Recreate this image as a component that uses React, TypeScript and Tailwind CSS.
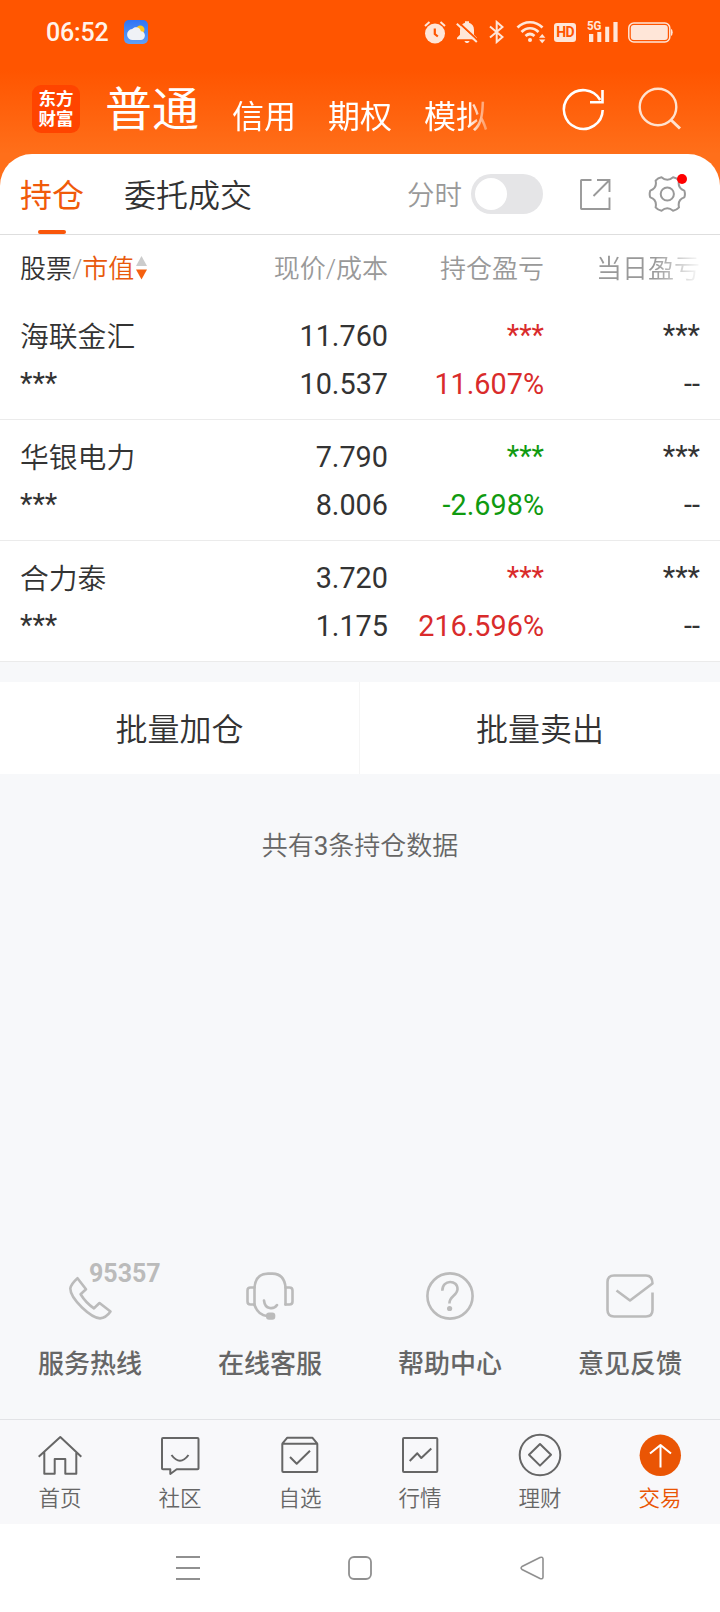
import { useState } from "react";
import type { ReactNode } from "react";

type Holding = {
  name: string;
  price: string;
  cost: string;
  profit: string;
  up: boolean;
};

const holdings: Holding[] = [
  { name: "海联金汇", price: "11.760", cost: "10.537", profit: "11.607%", up: true },
  { name: "华银电力", price: "7.790", cost: "8.006", profit: "-2.698%", up: false },
  { name: "合力泰", price: "3.720", cost: "1.175", profit: "216.596%", up: true },
];

function StatusBar() {
  return (
    <div className="h-16 pt-5 pl-[46px] pr-[47px] flex items-start text-[#ffe6d8]">
      <span className="mt-px text-[25px] leading-6 font-medium tracking-[-0.2px] text-[#fff3ea] w-[78px] whitespace-nowrap">06:52</span>
      <svg className="w-6 h-6" viewBox="0 0 24 24">
        <defs>
          <linearGradient id="sky" x1="0" y1="0" x2="0" y2="1">
            <stop offset="0" stopColor="#2f74f5" />
            <stop offset="1" stopColor="#5fa0f8" />
          </linearGradient>
        </defs>
        <rect width="24" height="24" rx="5" fill="url(#sky)" />
        <circle cx="16.3" cy="9.7" r="4.2" fill="#ffc61c" />
        <path d="M9 20a5.500 5.500 0 0 1-.8-11c1.500-1.600 3-2 4.500-1.700 2.300.3 3.700 1.900 4.200 3.900 2.300 0 4 1.700 4 4.300S19 20 16.700 20z" fill="#eff2f6" />
      </svg>

      <div className="ml-auto flex items-start">
        <svg className="w-[22px] h-6" viewBox="0 0 22 24">
          <circle cx="11" cy="13.500" r="10" fill="currentColor" />
          <path d="M1 6l4.500-4M21 6l-4.500-4" stroke="currentColor" strokeWidth="2" />
          <path d="M10.800 8.500V14l3 2.500" stroke="#f50" strokeWidth="2.200" fill="none" />
        </svg>
        <svg className="ml-[10px] w-[22px] h-6" viewBox="0 0 22 24">
          <path d="M1 19.300v-1.600l3-3V10c0-4 2-6.300 5-7.200V1.300h4v1.500c3 .9 5 3.200 5 7.200v4.700l3 3v1.600z" fill="currentColor" />
          <path d="M1.500 1.500l20 18.500" stroke="#f50" strokeWidth="2" />
          <path d="M.8 3.700l20 18.300" stroke="currentColor" strokeWidth="2" />
          <path d="M8.500 21h5c-.5 1.500-1.300 2-2.500 2s-2-.5-2.500-2z" fill="currentColor" />
        </svg>
        <svg className="ml-[11px] w-[15px] h-6" viewBox="0 0 15 24" fill="none" stroke="currentColor" strokeWidth="2">
          <path d="M1 6.500l12.500 10.500-5.800 5V2l5.800 5L1 17.500" />
        </svg>
        <svg className="ml-3 w-[30px] h-6" viewBox="0 0 30 24" fill="none">
          <path d="M1.500 7.500c7-7 18-7 25 0M5.500 12c5-5 12-5 17 0M9.500 16c3-2.700 6-2.700 9 0" stroke="currentColor" strokeWidth="2.700" />
          <circle cx="14" cy="20" r="2" fill="currentColor" />
          <path d="M23 17.700l3.200-3.700 3.200 3.700zM23 19.500h6.400l-3.200 3.700z" fill="currentColor" />
        </svg>
        <div className="ml-2 mt-[3px] w-[22px] h-[19px] rounded-[3px] bg-[#ffe6d8] text-[#ff5500] text-[14px] leading-[19px] font-bold text-center tracking-tighter">HD</div>
        <svg className="ml-[11px] w-[31px] h-6 overflow-visible" viewBox="0 0 31 24" fill="currentColor">
          <text x="0" y="10.300" fontSize="13" fontWeight="700" textLength="14.500" lengthAdjust="spacingAndGlyphs">5G</text>
          <path d="M2 14h4.300v8H2zM10.300 12h4v10h-4zM18.200 6.700h4V22h-4zM26.400 2h4.200v20h-4.200z" />
        </svg>
        <svg className="ml-[10px] w-[45px] h-6" viewBox="0 0 45 24">
          <rect x=".8" y="3" width="41" height="19" rx="5" fill="none" stroke="currentColor" strokeWidth="1.500" />
          <rect x="2.800" y="5" width="37" height="15" rx="3" fill="currentColor" />
          <path d="M43 8.700q1.700.5 1.700 3.600T43 16z" fill="currentColor" />
        </svg>
      </div>
    </div>
  );
}

function TitleBar() {
  return (
    <div className="h-[90px] flex items-start pl-8 text-white">
      <div className="mt-[21px] size-12 rounded-[9px] bg-[#ff4400] flex flex-col items-center justify-center text-[17.500px] leading-[20px] font-bold">
        <span>东方</span>
        <span>财富</span>
      </div>
      <div className="ml-[25px] mt-[22px] text-[47px] leading-[48px]">普通</div>
      <div className="ml-[33px] mt-[33px] w-[256px] flex gap-8 whitespace-nowrap text-[32px] leading-10 mask-r-from-[236px] mask-r-to-[264px]">
        <span>信用</span>
        <span>期权</span>
        <span>模拟</span>
      </div>
      <svg className="ml-[72px] mt-[22px] size-12 shrink-0" viewBox="0 0 48 48" fill="none" stroke="currentColor" strokeWidth="2.600">
        <path d="M42.700 24A19.400 19.400 0 1 1 40.200 14" />
        <path d="M42.500 4v12.300H30" />
      </svg>
      <svg className="ml-7 mt-[22px] size-12 shrink-0 text-[#ffe2cf]" viewBox="0 0 48 48" fill="none" stroke="currentColor" strokeWidth="2.400">
        <circle cx="22" cy="21" r="18.300" />
        <path d="M34.500 33.500l9.500 9" strokeWidth="3" />
      </svg>
    </div>
  );
}

function Tabs() {
  const [live, setLive] = useState(false);

  return (
    <div className="h-[81px] border-b border-[#dedede] flex items-center pl-5">
      <div className="relative pt-1 text-[32px] leading-8 text-[#f05a0a]">
        持仓
        <span className="absolute left-[18px] -bottom-[22px] w-7 h-1 rounded-sm bg-[#f9560a]" />
      </div>
      <div className="ml-10 pt-1 text-[32px] leading-8 font-[350] text-[#333]">委托成交</div>
      <div className="ml-[155px] pt-1 text-[27.500px] leading-8 font-[350] text-[#999]">分时</div>
      <button
        onClick={() => setLive(!live)}
        className={live ? "ml-[9px] w-[72px] h-10 p-1 rounded-full flex justify-end bg-[#f9560a]" : "ml-[9px] w-[72px] h-10 p-1 rounded-full flex bg-[#e5e5e7]"}
      >
        <span className="size-8 rounded-full bg-white" />
      </button>
      <svg className="ml-9 size-8" viewBox="0 0 32 32" fill="none" stroke="#999" strokeWidth="1.900">
        <path d="M12.500 2H2.500Q2 2 2 2.500V30.500Q2 31 2.500 31H30.500V19.500M18 2H30.500V14M30.500 2L14.500 18" />
      </svg>
      <div className="relative ml-[37px] size-10">
        <svg className="size-10" viewBox="0 0 40 40" fill="none" stroke="#999" strokeWidth="2">
          <circle cx="19.300" cy="20" r="6.600" />
          <path
            d="M36.300 16.600Q29.300 14.200 31 6.600Q28.700 3.900 25.100 3.200Q19.300 8.400 13.500 3.200Q9.900 3.900 7.600 6.600Q9.300 14.200 2.300 16.600Q1 20 2.300 23.400Q9.300 25.800 7.600 33.400Q9.900 36.100 13.500 36.800Q19.300 31.600 25.100 36.800Q28.700 36.100 31 33.400Q29.300 25.800 36.300 23.400Q37.600 20 36.300 16.600Z"
            strokeLinejoin="round"
          />
        </svg>
        <span className="absolute top-0 right-px size-[10px] rounded-full bg-[#ff0000]" />
      </div>
    </div>
  );
}

function TableHead() {
  return (
    <div className="h-16 px-5 pt-1 grid grid-cols-[1fr_170px_156px_156px] items-center text-[26px] leading-8 font-[350] text-[#999] text-right whitespace-nowrap">
      <div className="flex items-center text-left">
        <span className="text-[#333]">股票</span>
        <span>/</span>
        <span className="text-[#e8590c]">市值</span>
        <svg className="w-[11px] h-6 ml-0.5 -mt-0.5" viewBox="0 0 11 24">
          <path d="M5.500 0L11 10H0z" fill="#ccc" />
          <path d="M5.500 23.500L11 13.500H0z" fill="#f5600f" />
        </svg>
      </div>
      <div>现价/成本</div>
      <div>持仓盈亏</div>
      <div className="mask-r-from-[110px] mask-r-to-[158px]">当日盈亏</div>
    </div>
  );
}

function Masked() {
  return <div className="-translate-y-px">***</div>;
}

function HoldingRow({ item }: { item: Holding }) {
  return (
    <div className="h-[121px] px-5 pt-[13px] border-b border-[#ebebeb] grid grid-cols-[1fr_170px_156px_156px] text-[28.800px] leading-[48px] text-[#333] text-right">
      <div className="text-left">
        <div className="translate-y-px font-[350]">{item.name}</div>
        <Masked />
      </div>
      <div>
        <div>{item.price}</div>
        <div>{item.cost}</div>
      </div>
      <div className={item.up ? "text-[#d92b2b]" : "text-[#109a10]"}>
        <Masked />
        <div>{item.profit}</div>
      </div>
      <div>
        <Masked />
        <div>--</div>
      </div>
    </div>
  );
}

function Service({ label, children }: { label: string; children: ReactNode }) {
  return (
    <div className="flex flex-col items-center">
      <div className="relative size-12">{children}</div>
      <div className="mt-7 text-[26px] leading-8 font-medium text-[#666]">{label}</div>
    </div>
  );
}

function Services() {
  const icon = "size-12 text-[#bbb]";
  return (
    <div className="mt-auto h-[147px] grid grid-cols-4">
      <Service label="服务热线">
        <svg className={icon} viewBox="0 0 48 48" fill="none" stroke="currentColor" strokeWidth="2.600" strokeLinejoin="round">
          <path d="M11.500 6.200L20 17.200L14.600 22.200Q20 31 28 36.300L33.500 31L44.500 39.500Q40 46 34 46.400Q27 46 16 35.500Q4.300 24 4.300 16.500Q5 12 11.500 6.200Z" />
        </svg>
        <span className="absolute left-[23px] -top-[10px] text-[25px] leading-6 font-bold text-[#bbb]">95357</span>
      </Service>
      <Service label="在线客服">
        <svg className={icon} viewBox="0 0 48 48" fill="none" stroke="currentColor" strokeWidth="2.600" strokeLinecap="round">
          <path d="M8.500 33V15.500Q9.500 1.800 22 1.600H26.500Q38.500 2 39.500 15.500V32.500" />
          <path d="M8.500 15.500H4.500Q1.500 15.500 1.500 18.500V29.500Q1.500 32.500 4.500 32.500H8.500M39.500 15.500H43.500Q46.500 15.500 46.500 18.500V29.500Q46.500 32.500 43.500 32.500H39.500" />
          <path d="M18 28.500C19 38 28 37.500 31 33M8.500 33Q12 43 21 44" />
          <rect x="20" y="40.500" width="9.300" height="7.300" rx="3" fill="currentColor" stroke="none" />
        </svg>
      </Service>
      <Service label="帮助中心">
        <svg className={icon} viewBox="0 0 48 48" fill="none" stroke="currentColor" strokeWidth="2.600">
          <circle cx="24" cy="24" r="22.600" />
          <path d="M16.300 18.700C16.300 7 32 7.500 31.500 17.500C31 24 23.400 24 23.400 31.500" />
          <circle cx="23.600" cy="36.500" r="2.600" fill="currentColor" stroke="none" />
        </svg>
      </Service>
      <Service label="意见反馈">
        <svg className={icon} viewBox="0 0 48 48" fill="none" stroke="currentColor" strokeWidth="2.600" strokeLinejoin="round">
          <path d="M46.500 20.500V38Q46.500 44.500 40 44.500H8Q1.500 44.500 1.500 38V10Q1.500 3.500 8 3.500H40Q46.500 3.500 46.500 11.500L24 28.500L10.500 18.500" />
        </svg>
      </Service>
    </div>
  );
}

const tabs: { label: string; icon: ReactNode }[] = [
  {
    label: "首页",
    icon: <path d="M2.700 23.700L24.300 4L45.300 23.700M8.300 18.700V40.800H18.700V26H29.300V40.800H40.300V18.700" />,
  },
  {
    label: "社区",
    icon: <path d="M7 5H41.500Q42.500 5 42.500 6V35.500Q42.500 36.300 41.500 36.300H20.700L14.300 41V36.300H7Q6 36.300 6 35.500V6Q6 5 7 5ZM15.500 22Q24 33.500 32.500 22" />,
  },
  {
    label: "自选",
    icon: <path d="M6.300 10.700L11.300 4.700H36.300L41.300 10.700M6.300 10.700H41.300V38Q41.300 39 40.300 39H7.300Q6.300 39 6.300 38ZM14 24L20.700 30.700L34 17.700" />,
  },
  {
    label: "行情",
    icon: <path d="M8 5H40.300Q41.300 5 41.300 6V38Q41.300 39 40.300 39H8Q7 39 7 38V6Q7 5 8 5ZM13.700 28L21.300 20.300L25.300 25L35.300 15.500" />,
  },
  {
    label: "理财",
    icon: (
      <>
        <circle cx="24" cy="22" r="20.300" />
        <path d="M24 11L35 21.800L24 32.600L13 21.800Z" />
      </>
    ),
  },
  {
    label: "交易",
    icon: (
      <>
        <circle cx="24.300" cy="22.300" r="20.700" fill="#ea5504" stroke="none" />
        <path d="M24.500 34.500V12M14 20.500L24.500 12L35 20.500" stroke="#fff" />
      </>
    ),
  },
];

function BottomTabs() {
  const [active, setActive] = useState("交易");

  return (
    <nav className="h-[105px] shrink-0 border-t border-[#e2e3e6] bg-[#f8f8fa] grid grid-cols-6">
      {tabs.map((tab) => (
        <button
          key={tab.label}
          onClick={() => setActive(tab.label)}
          className={`flex flex-col items-center pt-[13px] ${active === tab.label ? "text-[#ea5504]" : "text-[#666]"}`}
        >
          <svg className="w-12 h-11" viewBox="0 0 48 44" fill="none" stroke="#666" strokeWidth="2" strokeLinejoin="round">
            {tab.icon}
          </svg>
          <span className="mt-[11px] text-[21.500px] leading-[22px] font-[350]">{tab.label}</span>
        </button>
      ))}
    </nav>
  );
}

function SystemNav() {
  return (
    <div className="h-[88px] shrink-0 bg-white flex items-center justify-center gap-[148px]">
      <svg className="size-6" viewBox="0 0 24 24" stroke="#909090" strokeWidth="2">
        <path d="M0 1h24M0 12h24M0 23h24" />
      </svg>
      <svg className="size-6" viewBox="0 0 24 24" fill="none" stroke="#909090" strokeWidth="1.800">
        <rect x="1" y="1" width="22" height="22" rx="5" />
      </svg>
      <svg className="size-6" viewBox="0 0 24 24" fill="none" stroke="#909090" strokeWidth="1.600" strokeLinejoin="round">
        <path d="M2 10.500L20 1.500Q23 .5 23 3V21Q23 23.500 20 22.500L2 13.500Q.2 12 2 10.500Z" />
      </svg>
    </div>
  );
}

export default function App() {
  return (
    <div className="w-[720px] h-[1612px] flex flex-col overflow-hidden bg-[#f7f8fa] font-['Roboto','Noto_Sans_CJK_SC',sans-serif]">
      <div className="bg-[linear-gradient(to_bottom,#ff5500_70px,#ff6f1a_154px)]">
        <StatusBar />
        <TitleBar />
        <div className="rounded-t-[32px] bg-white">
          <Tabs />
          <TableHead />
          {holdings.map((item) => (
            <HoldingRow key={item.name} item={item} />
          ))}
        </div>
      </div>

      <div className="mt-5 h-[92px] shrink-0 bg-white grid grid-cols-2 text-[32px] leading-8 font-[350] text-[#333]">
        <button className="pt-1 border-r border-[#f5f5f5]">批量加仓</button>
        <button className="pt-1">批量卖出</button>
      </div>
      <div className="mt-14 text-center text-[26px] leading-8 font-[350] text-[#666]">
        共有<span className="font-normal">{holdings.length}</span>条持仓数据
      </div>

      <Services />
      <BottomTabs />
      <SystemNav />
    </div>
  );
}
